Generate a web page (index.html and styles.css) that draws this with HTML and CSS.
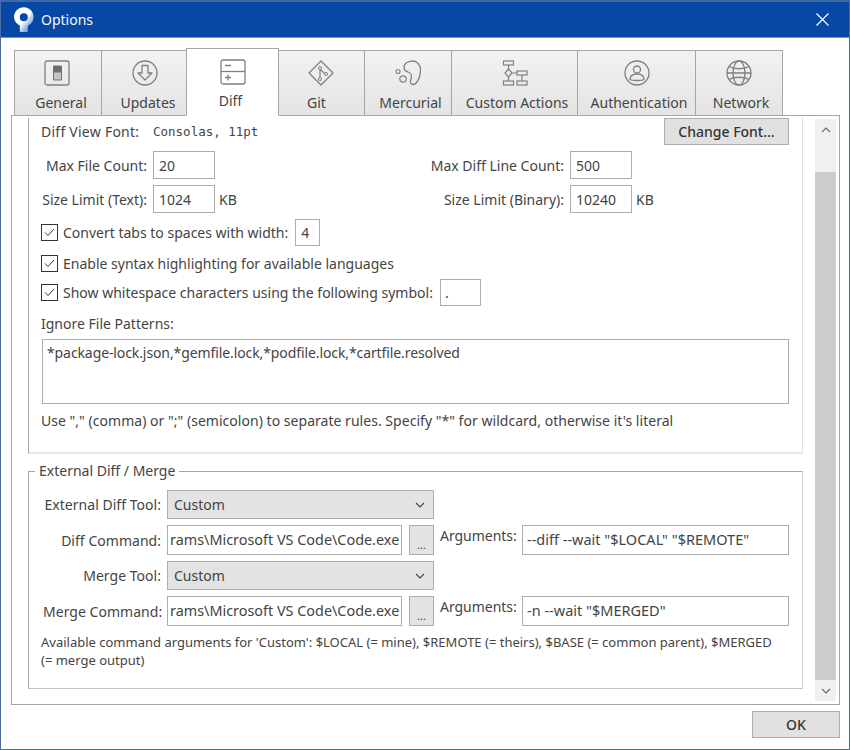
FILE: index.html
```html
<!DOCTYPE html>
<html lang="en">
<head>
<meta charset="utf-8">
<title>Options</title>
<link rel="stylesheet" href="styles.css">
</head>
<body>
<div class="window">
  <header class="titlebar">
    <svg class="logo" width="20" height="25" viewBox="0 0 20 25"><defs><linearGradient id="lg" x1="0.15" y1="0.1" x2="0.8" y2="0.75"><stop offset="0.6" stop-color="#fff"/><stop offset="1" stop-color="#82a8e0"/></linearGradient></defs><path fill="url(#lg)" fill-rule="evenodd" d="M9.800 .200C4.400 .200 0 4.600 0 10c0 3.500 2.300 6.700 5.800 8.300v5.700c0 .6 .3 1 1 1h6c.6 0 1-.4 1-1v-5.300C17.300 17.300 19.600 13.800 19.600 10C19.600 4.600 15.200 .2 9.800 .2zM9.800 6.200a4 4 0 1 1 0 8a4 4 0 0 1 0-8z"/></svg>
    <span class="title">Options</span>
    <svg class="close" width="13" height="13" viewBox="0 0 13 13"><path d="M.5 .5l12 12M12.500 .5l-12 12" stroke="#fff" stroke-width="1.200" fill="none"/></svg>
  </header>
  <main class="content">
    <nav class="tabs">
      <div class="tab t-general">
        <svg class="ico" width="26" height="26" viewBox="0 0 26 26"><rect x="1" y="1" width="24" height="24" rx="2" fill="none" stroke="#808080" stroke-width="1.300"/><rect x="9" y="5.500" width="9" height="15" rx="1" fill="#6e6e6e"/><rect x="10" y="12.500" width="7" height="7" fill="#c4c4c4"/></svg>
        <span>General</span>
      </div>
      <div class="tab t-updates">
        <svg class="ico" width="26" height="26" viewBox="0 0 26 26"><circle cx="13" cy="13" r="12" fill="none" stroke="#808080" stroke-width="1.300"/><path d="M10 5.500h6v7.500h4l-7 7l-7-7h4z" fill="none" stroke="#808080" stroke-width="1.300" stroke-linejoin="round"/></svg>
        <span>Updates</span>
      </div>
      <div class="tab t-diff active">
        <svg class="ico" width="26" height="26" viewBox="0 0 26 26"><rect x="1" y="1" width="24" height="24" rx="2" fill="none" stroke="#808080" stroke-width="1.300"/><path d="M1 12.500h24" stroke="#808080" stroke-width="1.300"/><path d="M5 6.500h6M5 18.500h6M8 15.500v6" stroke="#808080" stroke-width="1.300" fill="none"/></svg>
        <span>Diff</span>
      </div>
      <div class="tab t-git">
        <svg class="ico" width="26" height="26" viewBox="0 0 26 26"><path d="M13 1L25 13L13 25L1 13z" fill="none" stroke="#808080" stroke-width="1.300" stroke-linejoin="round"/><path d="M12 7v12M12 9l6 6" stroke="#808080" stroke-width="1.200" fill="none"/><circle cx="12" cy="8" r="1.500" fill="#eee" stroke="#808080"/><circle cx="18" cy="14" r="1.500" fill="#eee" stroke="#808080"/><circle cx="12" cy="19" r="1.500" fill="#eee" stroke="#808080"/></svg>
        <span>Git</span>
      </div>
      <div class="tab t-mercurial">
        <svg class="ico" width="26" height="26" viewBox="0 0 26 26"><path d="M9 7C9 3 14 1 18 1C22 1 25.500 5 25.500 10C25.500 17 22 24.500 18 24.500C15 24.500 15 22 16 19C17 16 16 13 13 12C11 11.500 9 10 9 7z" fill="none" stroke="#808080" stroke-width="1.300"/><circle cx="3" cy="11.500" r="2" fill="none" stroke="#808080" stroke-width="1.200"/><circle cx="8" cy="19" r="3.200" fill="none" stroke="#808080" stroke-width="1.200"/></svg>
        <span>Mercurial</span>
      </div>
      <div class="tab t-custom">
        <svg class="ico" width="26" height="26" viewBox="0 0 26 26"><g fill="none" stroke="#808080" stroke-width="1.200"><rect x="1.500" y="1" width="10" height="4"/><rect x="1.500" y="21" width="10" height="4"/><rect x="15" y="11" width="10" height="4"/><rect x="15" y="21" width="10" height="4"/><path d="M6.500 5v4M6.500 17v4M10 13h5M20 15v6"/><path d="M6.500 9l3.500 4l-3.500 4l-3.500-4z"/></g></svg>
        <span>Custom Actions</span>
      </div>
      <div class="tab t-auth">
        <svg class="ico" width="26" height="26" viewBox="0 0 26 26"><g fill="none" stroke="#808080" stroke-width="1.300"><circle cx="13" cy="13" r="12"/><circle cx="13" cy="9.500" r="3.500"/><path d="M6 19.500c0-3.500 3-5.500 7-5.500s7 2 7 5.500c-2 1.300-12 1.300-14 0z"/></g></svg>
        <span>Authentication</span>
      </div>
      <div class="tab t-network">
        <svg class="ico" width="26" height="26" viewBox="0 0 26 26"><g fill="none" stroke="#808080" stroke-width="1.300"><circle cx="13" cy="13" r="12"/><ellipse cx="13" cy="13" rx="6" ry="12"/><path d="M3 6.500c5 3 15 3 20 0M3 19.500c5-3 15-3 20 0M1 13h24"/></g></svg>
        <span>Network</span>
      </div>
    </nav>
    <section class="panel">
      <div class="scroller">
        <div class="pane">
          <div class="group-top">
            <div class="row r-font">
              <span class="lbl-font">Diff View Font:</span>
              <span class="mono">Consolas, 11pt</span>
              <button class="btn btn-font">Change Font...</button>
            </div>
            <div class="row r-count">
              <label class="lbl w-left">Max File Count:</label><div class="input w-small">20</div>
              <label class="lbl w-right">Max Diff Line Count:</label><div class="input w-small">500</div>
            </div>
            <div class="row r-size">
              <label class="lbl w-left">Size Limit (Text):</label><div class="input w-small">1024</div><span class="unit">KB</span>
              <label class="lbl w-right2">Size Limit (Binary):</label><div class="input w-small">10240</div><span class="unit">KB</span>
            </div>
            <div class="row r-check1">
              <span class="check"><svg width="11" height="9" viewBox="0 0 11 9"><path d="M1 4.500l3 3l6-6.500" fill="none" stroke="#333" stroke-width="1"/></svg></span>
              <span>Convert tabs to spaces with width:</span>
              <div class="input w-tiny">4</div>
            </div>
            <div class="row r-check2">
              <span class="check"><svg width="11" height="9" viewBox="0 0 11 9"><path d="M1 4.500l3 3l6-6.500" fill="none" stroke="#333" stroke-width="1"/></svg></span>
              <span>Enable syntax highlighting for available languages</span>
            </div>
            <div class="row r-check3">
              <span class="check"><svg width="11" height="9" viewBox="0 0 11 9"><path d="M1 4.500l3 3l6-6.500" fill="none" stroke="#333" stroke-width="1"/></svg></span>
              <span>Show whitespace characters using the following symbol:</span>
              <div class="input w-sym">.</div>
            </div>
            <div class="caption">Ignore File Patterns:</div>
            <div class="textarea">*package-lock.json,*gemfile.lock,*podfile.lock,*cartfile.resolved</div>
            <div class="hint">Use "," (comma) or ";" (semicolon) to separate rules. Specify "*" for wildcard, otherwise it's literal</div>
          </div>
          <fieldset class="group-ext">
            <legend>External Diff / Merge</legend>
            <div class="ext-grid">
              <label class="ext-lbl">External Diff Tool:</label>
              <div class="select"><span>Custom</span><svg width="10" height="6" viewBox="0 0 10 6"><path d="M1 1l4 4l4-4" fill="none" stroke="#444" stroke-width="1.100"/></svg></div>
              <span></span>
              <label class="ext-lbl">Diff Command:</label>
              <div class="cmd"><div class="input path">rams\Microsoft VS Code\Code.exe</div><button class="btn-dots">...</button></div>
              <div class="args"><label class="args-lbl">Arguments:</label><div class="input arg">--diff --wait "$LOCAL" "$REMOTE"</div></div>
              <label class="ext-lbl">Merge Tool:</label>
              <div class="select"><span>Custom</span><svg width="10" height="6" viewBox="0 0 10 6"><path d="M1 1l4 4l4-4" fill="none" stroke="#444" stroke-width="1.100"/></svg></div>
              <span></span>
              <label class="ext-lbl">Merge Command:</label>
              <div class="cmd"><div class="input path">rams\Microsoft VS Code\Code.exe</div><button class="btn-dots">...</button></div>
              <div class="args"><label class="args-lbl">Arguments:</label><div class="input arg">-n --wait "$MERGED"</div></div>
            </div>
            <p class="ext-note">Available command arguments for 'Custom': $LOCAL (= mine), $REMOTE (= theirs), $BASE (= common parent), $MERGED (= merge output)</p>
          </fieldset>
        </div>
        <div class="scrollbar">
          <svg class="sb-arrow" width="10" height="6" viewBox="0 0 10 6"><path d="M1 5l4-4l4 4" fill="none" stroke="#666" stroke-width="1.100"/></svg>
          <div class="sb-thumb"></div>
          <svg class="sb-arrow" width="10" height="6" viewBox="0 0 10 6"><path d="M1 1l4 4l4-4" fill="none" stroke="#666" stroke-width="1.100"/></svg>
        </div>
      </div>
    </section>
    <footer class="footer"><button class="btn btn-ok">OK</button></footer>
  </main>
</div>
</body>
</html>
```
FILE: styles.css
```css
* { box-sizing: border-box; }
html, body { margin: 0; padding: 0; }
body {
  width: 850px;
  height: 750px;
  overflow: hidden;
  background: #fff;
  font-family: "Noto Sans", "Open Sans", sans-serif;
  font-size: 14px;
  color: #444;
}
.window {
  width: 850px;
  height: 750px;
  display: flex;
  flex-direction: column;
  border: 1px solid #4a6f9c;
  border-top: 2px solid #3e6ba3;
}
.titlebar {
  height: 36px;
  flex: none;
  background: #0747a6;
  border-bottom: 1px solid #6d93c9;
  display: flex;
  align-items: center;
  padding: 0 20px 0 13px;
  color: #f2f6fc;
}
.logo { margin-right: 7px; }
.title { font-size: 14px; flex: 1; }
.content {
  flex: 1;
  min-height: 0;
  display: flex;
  flex-direction: column;
  padding: 10px 9px 0 10px;
}
.tabs {
  display: flex;
  align-items: flex-end;
  height: 68px;
  margin-bottom: -1px;
  padding-left: 3px;
  position: relative;
  z-index: 1;
  flex: none;
}
.tab {
  height: 66px;
  border: 1px solid #a6a6a6;
  background: linear-gradient(#f2f2f2, #e4e4e4);
  display: flex;
  flex-direction: column;
  align-items: center;
  padding-top: 9px;
  margin-right: -1px;
  color: #444;
  white-space: nowrap;
}
.tab span { margin-top: 7px; line-height: 20px; }
.tab .ico { flex: none; }
.tab.active {
  height: 68px;
  background: #fff;
  border-bottom-color: #fff;
  padding-top: 10px;
  position: relative;
  z-index: 1;
}
.tab.active span { margin-top: 6px; margin-left: -4px; }
.t-general { width: 88px; }
.t-general span { margin-left: 6px; }
.t-general .ico { margin-left: -2px; }
.t-updates { width: 86px; }
.t-updates span { margin-left: 8px; }
.t-updates .ico { margin-left: 2px; }
.t-diff { width: 93px; }
.t-git { width: 87px; }
.t-git span { margin-left: -10px; }
.t-git .ico { margin-left: -2px; }
.t-mercurial { width: 88px; }
.t-mercurial span { margin-left: 5px; }
.t-custom { width: 127px; }
.t-custom span { margin-left: 5px; }
.t-auth { width: 119px; }
.t-auth span { margin-left: 5px; }
.t-network { width: 88px; }
.t-network span { margin-left: 4px; }
.panel {
  flex: none;
  height: 590px;
  border: 1px solid #a6a6a6;
  padding: 2px 3px 3px 16px;
}
.scroller {
  display: flex;
  height: 100%;
  gap: 12px;
}
.pane {
  width: 775px;
  flex: none;
  display: flex;
  flex-direction: column;
}
.group-top {
  height: 336px;
  flex: none;
  border-left: 1px solid #a6a6a6;
  border-right: 1px solid #e0e0e0;
  border-bottom: 2px solid #e6e6e6;
  padding: 0 13px 0 13px;
}
.row {
  display: flex;
  align-items: center;
}
.r-font { height: 27px; margin-bottom: 6px; }
.lbl-font { width: 111px; margin-left: -1px; letter-spacing: .25px; flex: none; }
.mono { font-family: "DejaVu Sans Mono", "Liberation Mono", monospace; font-size: 12.500px; flex: 1; margin-left: 1px; }
.btn {
  font: inherit;
  color: #333;
  background: #e1e1e1;
  border: 1px solid #adadad;
  padding: 0;
}
.btn-font { width: 125px; height: 27px; font-weight: 500; }
.r-count { height: 28px; margin-bottom: 6px; }
.r-size { height: 28px; margin-bottom: 6px; }
.lbl { text-align: right; padding-right: 6px; white-space: nowrap; flex: none; }
.w-left { width: 111px; }
.w-right { width: 355px; }
.w-right2 { width: 355px; margin-left: -30px; }
.input {
  background: #fff;
  border: 1px solid #adadad;
  display: flex;
  align-items: center;
  padding-left: 5px;
  white-space: nowrap;
  overflow: hidden;
}
.w-small { width: 62px; height: 100%; flex: none; }
.unit { width: 30px; padding-left: 4px; flex: none; }
.r-check1 { height: 27px; margin-bottom: 6px; }
.r-check2 { height: 23px; margin-bottom: 4px; }
.r-check3 { height: 27px; }
.check {
  width: 17px;
  height: 17px;
  border: 1px solid #333;
  background: #fff;
  display: flex;
  align-items: center;
  justify-content: center;
  margin: 0 5px 0 -1px;
  flex: none;
}
.w-tiny { width: 25px; height: 100%; margin-left: 7px; }
.w-sym { width: 41px; height: 100%; margin-left: 7px; padding-left: 4px; }
.caption { margin: 8px 0 0 -1px; line-height: 20px; }
.textarea {
  width: 747px;
  height: 65px;
  margin-top: 5px;
  border: 1px solid #adadad;
  padding: 3px 4px;
  line-height: 20px;
  letter-spacing: -.1px;
}
.hint { margin-top: 7px; line-height: 20px; margin-left: -1px; letter-spacing: .03px; }
.group-ext {
  margin: 8px 0 0;
  padding: 10px 12px 0 14px;
  height: 227px;
  border: 1px solid #a6a6a6;
  border-bottom-color: #c4c4c4;
  border-right-color: #d6d6d6;
  min-width: 0;
}
.group-ext legend { padding: 0 4px; margin-left: -8px; line-height: 18px; }
.ext-grid {
  display: grid;
  grid-template-columns: 124px 267px 355px;
  grid-template-rows: 29px 30px 29px 30px;
  row-gap: 6px;
}
.ext-lbl { align-self: center; text-align: right; padding-right: 6px; white-space: nowrap; letter-spacing: .03px; }
.select {
  background: #e3e3e3;
  border: 1px solid #adadad;
  display: flex;
  align-items: center;
  justify-content: space-between;
  padding: 0 8px 0 6px;
}
.cmd { display: flex; gap: 7px; }
.path { width: 235px; padding: 0 0 2px 2px; font-size: 14.400px; }
.btn-dots {
  width: 25px;
  font-family: inherit;
  font-size: 11px;
  color: #444;
  background: #e3e3e3;
  border: 1px solid #adadad;
  padding: 8px 0 0;
}
.args { display: flex; padding-left: 6px; }
.args-lbl { width: 82px; flex: none; line-height: 22px; letter-spacing: -.03px; }
.arg { width: 267px; padding: 0 0 2px 4px; font-size: 14.500px; }
.ext-note { margin: 7px 0 0 -2px; font-size: 13px; line-height: 18px; width: 742px; }
.scrollbar {
  width: 21px;
  margin-top: 1px;
  background: #f0f0f0;
  display: flex;
  flex-direction: column;
  align-items: center;
  justify-content: space-between;
  flex: none;
}
.sb-arrow { margin: 8px 0 7px; flex: none; }
.sb-thumb { width: 21px; flex: 1; background: #cdcdcd; margin: 32px 0 0; }
.footer {
  flex: 1;
  display: flex;
  justify-content: flex-end;
  align-items: flex-start;
  padding-top: 6px;
}
.btn-ok { width: 88px; height: 27px; font-size: 14px; font-weight: 500; }
```
